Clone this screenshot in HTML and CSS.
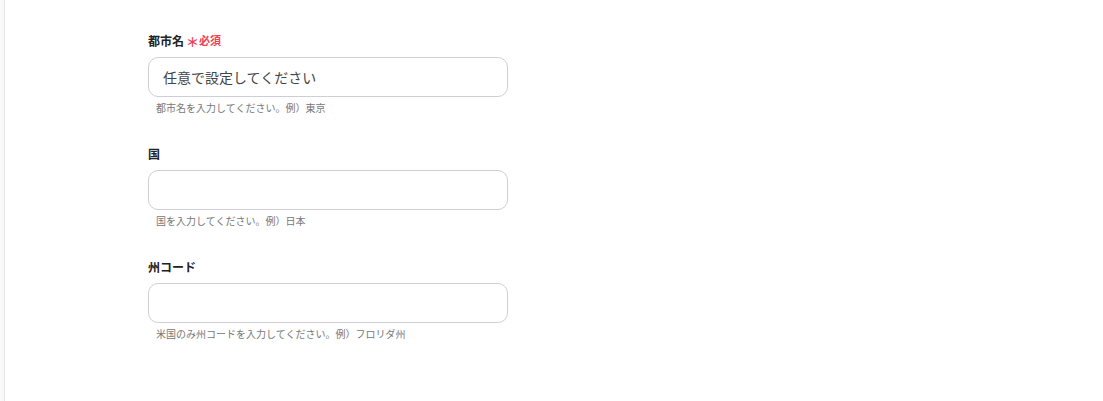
FILE: index.html
```html
<!DOCTYPE html>
<html lang="ja">
<head>
<meta charset="utf-8">
<link rel="stylesheet" href="styles.css">
</head>
<body>
<div class="page">
  <aside class="rail"></aside>
  <main class="form">
    <div class="field">
      <div class="label">都市名<span class="req"><span class="star">＊</span>必須</span></div>
      <div class="input"><span class="ph">任意で設定してください</span></div>
      <div class="hint">都市名を入力してください。例）東京</div>
    </div>
    <div class="field">
      <div class="label">国</div>
      <div class="input"></div>
      <div class="hint">国を入力してください。例）日本</div>
    </div>
    <div class="field">
      <div class="label">州コード</div>
      <div class="input"></div>
      <div class="hint">米国のみ州コードを入力してください。例）フロリダ州</div>
    </div>
  </main>
</div>
</body>
</html>
```
FILE: styles.css
```css
html, body {
  margin: 0;
  padding: 0;
  background: #fff;
}
body {
  font-family: "Noto Sans CJK JP", "Noto Sans", sans-serif;
  color: #222;
}
.page {
  display: flex;
  height: 401px;
}
.rail {
  width: 4px;
  background: #f9f9f9;
  border-right: 1px solid #e6e6e6;
  flex: none;
}
.form {
  padding: 32px 0 0 143px;
  display: flex;
  flex-direction: column;
  gap: 30px;
}
.field {
  display: flex;
  flex-direction: column;
  width: 360px;
}
.label {
  font-size: 12px;
  font-weight: 700;
  line-height: 17px;
  height: 17px;
  display: flex;
  align-items: center;
  color: #222;
}
.req {
  color: #f2405a;
  font-size: 11px;
  margin-left: 2px;
  display: flex;
  align-items: center;
}
.star {
  font-size: 13px;
  font-weight: 700;
  margin-right: 0;
  line-height: 1;
  position: relative;
  top: 1px;
}
.input {
  margin-top: 8px;
  height: 38px;
  border: 1px solid #ccd0d6;
  border-radius: 10px;
  display: flex;
  align-items: center;
  padding-left: 14px;
  box-sizing: content-box;
}
.ph {
  font-size: 14px;
  color: #444;
}
.hint {
  margin-top: 4px;
  padding-left: 8px;
  font-size: 10px;
  line-height: 14px;
  color: #777;
}
```
